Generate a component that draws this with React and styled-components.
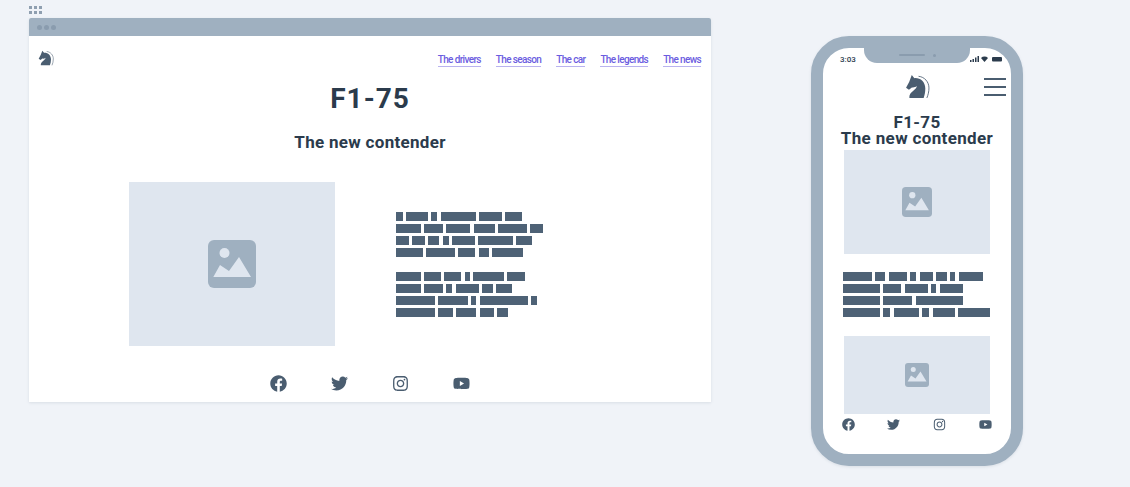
import React from "react"
import styled, { createGlobalStyle } from "styled-components"
import { FaFacebook, FaTwitter, FaInstagram, FaYoutube } from "react-icons/fa"

const GlobalStyle = createGlobalStyle`
  html, body {
    margin: 0;
    padding: 0;
    background: #f0f3f8;
    font-family: Roboto, "Noto Sans", sans-serif;
  }
`

const Page = styled.div`
  display: flex;
  align-items: flex-start;
  width: 1130px;
  height: 487px;
  overflow: hidden;
  padding-left: 29px;
  box-sizing: border-box;
`

const DesktopColumn = styled.div`
  width: 682px;
  padding-top: 6px;
`

const Grip = styled.div`
  display: grid;
  grid-template-columns: repeat(3, 3px);
  gap: 2px;
  margin-bottom: 4px;
  height: 8px;

  span {
    width: 3px;
    height: 3px;
    background: #8f9fb0;
  }
`

const Browser = styled.div`
  background: #fff;
  height: 384px;
  border-radius: 2px 2px 0 0;
  box-shadow: 0 1px 3px rgba(90, 110, 130, 0.15);
`

const TitleBar = styled.div`
  display: flex;
  align-items: center;
  gap: 2px;
  height: 18px;
  padding-left: 8px;
  background: #9fb0c0;
  border-radius: 2px 2px 0 0;

  span {
    width: 5px;
    height: 5px;
    border-radius: 50%;
    background: #8a9cae;
  }
`

const Nav = styled.nav`
  display: flex;
  justify-content: space-between;
  align-items: center;
  height: 20px;
  margin-top: 12px;
  padding: 0 10px 0 9px;
`

const NavLinks = styled.div`
  display: flex;
  gap: 15px;
  margin-top: 5px;
`

const NavLink = styled.a`
  font-size: 10px;
  line-height: 12px;
  font-weight: 500;
  letter-spacing: -0.64px;
  color: #6b5ce0;
  border-bottom: 1px solid #b9b3ef;
`

const Title = styled.h1`
  margin: 13px 0 0;
  text-align: center;
  font-size: 28px;
  line-height: 36px;
  font-weight: 700;
  letter-spacing: 1px;
  color: #2b3b4c;
`

const Subtitle = styled.h2`
  margin: 14px 0 0;
  text-align: center;
  font-size: 17px;
  line-height: 22px;
  font-weight: 700;
  letter-spacing: 0.3px;
  color: #2b3b4c;
`

const Feature = styled.div`
  display: flex;
  margin: 29px 0 0 100px;
`

const Placeholder = styled.div`
  display: flex;
  align-items: center;
  justify-content: center;
  flex: none;
  width: ${props => props.$w}px;
  height: ${props => props.$h}px;
  background: #dfe6ef;
  margin-left: ${props => props.$left || 0}px;
`

const Copy = styled.div`
  margin: 30px 0 0 61px;
`

const Paragraph = styled.div`
  & + & {
    margin-top: 15px;
  }
`

const Line = styled.div`
  display: flex;
  gap: ${props => props.$gap}px;
  height: 9px;
  margin-bottom: 3px;
`

const Bar = styled.span`
  display: block;
  width: ${props => props.$w}px;
  background: #4e6276;
`

const Socials = styled.div`
  display: flex;
  color: #4a5d70;
  font-size: ${props => props.$size}px;
  gap: ${props => props.$gap}px;
  margin: ${props => props.$margin};

  svg {
    display: block;
  }
`

const Phone = styled.div`
  flex: none;
  width: 212px;
  height: 430px;
  margin: 36px 0 0 100px;
  box-sizing: border-box;
  border: 12px solid #9fb0c0;
  border-radius: 38px;
  background: #fff;
  position: relative;
  box-shadow: 0 1px 3px rgba(90, 110, 130, 0.15);
`

const Notch = styled.div`
  position: absolute;
  top: -1px;
  left: 41px;
  display: flex;
  align-items: center;
  justify-content: center;
  gap: 8px;
  width: 106px;
  height: 16px;
  background: #9fb0c0;
  border-radius: 0 0 13px 13px;

  i {
    display: block;
    height: 2px;
    width: 26px;
    background: #8a9cae;
    border-radius: 1px;
  }
  b {
    display: block;
    width: 3px;
    height: 3px;
    background: #8a9cae;
    border-radius: 50%;
  }
`

const StatusBar = styled.div`
  display: flex;
  justify-content: space-between;
  align-items: center;
  height: 12px;
  padding: 0 9px 0 17px;
  margin-top: 5px;
  font-size: 8px;
  font-weight: 500;
  color: #2b3b4c;
`

const PhoneHeader = styled.div`
  position: relative;
  display: flex;
  justify-content: center;
  margin-top: 9px;
  height: 25px;
`

const Burger = styled.div`
  position: absolute;
  right: 5px;
  top: 4px;
  display: flex;
  flex-direction: column;
  gap: 6px;

  span {
    display: block;
    width: 22px;
    height: 2px;
    background: #4a5d70;
  }
`

const PhoneTitle = styled.div`
  margin: 15px 0 4px;
  text-align: center;
  font-size: 17px;
  line-height: 16px;
  font-weight: 700;
  letter-spacing: 0.35px;
  color: #2b3b4c;
`

const PhoneCopy = styled.div`
  margin: 18px 0 0 20px;
  height: 64px;
`

const Knight = ({ size }) => (
  <svg width={size} height={size} viewBox="0 0 24 24">
    <path
      fill="#4a5d70"
      d="M6.500 1l2.500 3C14.500 3.500 19.500 7.500 19.500 14c0 3.400-.6 6.400-1.600 9H4.200c-.4-3 1.400-5.400 3.800-7 1.800-1.200 3.200-2.600 3.400-4.400-1.400 1.200-3.200 1.600-4.800 1.300L3.800 15 1 13.200l3-5.600z"
    />
    <path
      fill="none"
      stroke="#4a5d70"
      strokeWidth="0.8"
      d="M13 2.200c5.800.6 10 5.400 10 11.200 0 3.400-.8 6.800-2 9.600"
    />
  </svg>
)

const ImageIcon = ({ size }) => (
  <svg width={size} height={size} viewBox="0 0 48 48">
    <rect width="48" height="48" rx="6" fill="#9fb0c0" />
    <circle cx="16.500" cy="13" r="5" fill="#dfe6ef" />
    <path fill="#dfe6ef" d="M5.300 37L12 25l9 6 10-14 12 20z" />
  </svg>
)

const StatusIcons = () => (
  <svg width="32" height="6" viewBox="0 0 32 6">
    <path fill="#2b3b4c" d="M0 4h1.500v2H0zM2.500 3H4v3H2.500zM5 1.500h1.500V6H5zM7.500 0H9v6H7.500z" />
    <path fill="#2b3b4c" d="M11 2a5 5 0 0 1 7 0l-3.500 4z" />
    <rect x="22" y="1" width="10" height="4.500" rx="1" fill="#2b3b4c" />
  </svg>
)

const desktopCopy = [
  [
    [7, 22, 6, 35, 23, 17],
    [25, 19, 24, 21, 29, 13],
    [13, 13, 11, 6, 23, 35, 16],
    [27, 29, 17, 10, 31],
  ],
  [
    [25, 17, 17, 5, 31, 18],
    [25, 19, 6, 23, 11, 16],
    [39, 30, 5, 48, 6],
    [39, 15, 20, 14, 11],
  ],
]

const phoneCopy = [
  [29, 10, 18, 6, 13, 11, 5, 24],
  [37, 18, 23, 5, 23],
  [37, 29, 47],
  [37, 7, 25, 7, 22, 32],
]

const links = ["The drivers", "The season", "The car", "The legends", "The news"]

const TextLine = ({ widths, gap }) => (
  <Line $gap={gap}>
    {widths.map((w, i) => (
      <Bar key={i} $w={w} />
    ))}
  </Line>
)

const SocialIcons = props => (
  <Socials {...props}>
    <FaFacebook />
    <FaTwitter />
    <FaInstagram />
    <FaYoutube />
  </Socials>
)

export default function App() {
  return (
    <Page>
      <GlobalStyle />
      <DesktopColumn>
        <Grip>
          {[0, 1, 2, 3, 4, 5].map(i => (
            <span key={i} />
          ))}
        </Grip>
        <Browser>
          <TitleBar>
            <span />
            <span />
            <span />
          </TitleBar>
          <Nav>
            <Knight size={16} />
            <NavLinks>
              {links.map(l => (
                <NavLink key={l}>{l}</NavLink>
              ))}
            </NavLinks>
          </Nav>
          <Title>F1-75</Title>
          <Subtitle>The new contender</Subtitle>
          <Feature>
            <Placeholder $w={206} $h={164}>
              <ImageIcon size={48} />
            </Placeholder>
            <Copy>
              {desktopCopy.map((para, i) => (
                <Paragraph key={i}>
                  {para.map((widths, j) => (
                    <TextLine key={j} widths={widths} gap={3.2} />
                  ))}
                </Paragraph>
              ))}
            </Copy>
          </Feature>
          <SocialIcons $size={17} $gap={44} $margin="29px 0 0 240.500px" />
        </Browser>
      </DesktopColumn>
      <Phone>
        <Notch>
          <i />
          <b />
        </Notch>
        <StatusBar>
          <span>3:03</span>
          <StatusIcons />
        </StatusBar>
        <PhoneHeader>
          <Knight size={25} />
          <Burger>
            <span />
            <span />
            <span />
          </Burger>
        </PhoneHeader>
        <PhoneTitle>
          F1-75
          <br />
          The new contender
        </PhoneTitle>
        <Placeholder $w={146} $h={104} $left={21}>
          <ImageIcon size={30} />
        </Placeholder>
        <PhoneCopy>
          {phoneCopy.map((widths, i) => (
            <TextLine key={i} widths={widths} gap={3.4} />
          ))}
        </PhoneCopy>
        <Placeholder $w={146} $h={78} $left={21}>
          <ImageIcon size={24} />
        </Placeholder>
        <SocialIcons $size={13} $gap={32.7} $margin="4px 0 0 18.500px" />
      </Phone>
    </Page>
  )
}
